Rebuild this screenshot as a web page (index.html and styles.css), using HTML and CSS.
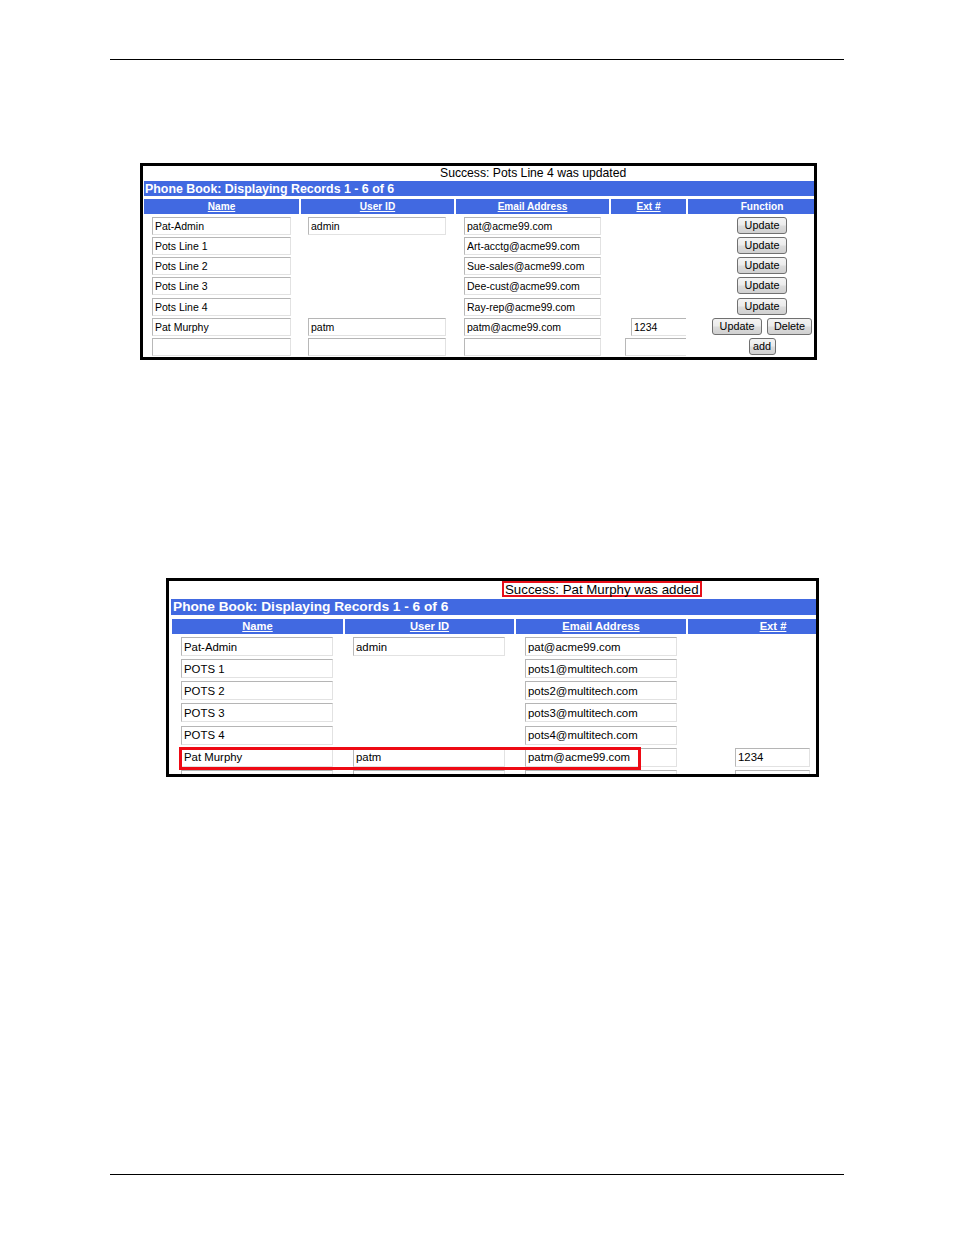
FILE: index.html
```html
<!DOCTYPE html>
<html>
<head>
<meta charset="utf-8">
<link rel="stylesheet" href="styles.css">
</head>
<body>
<div class="page">
  <div class="rule"></div>

  <div class="shot shot1">
    <div class="msg1">Success: Pots Line 4 was updated</div>
    <div class="title1">Phone Book: Displaying Records 1 - 6 of 6</div>
    <div class="grid1">
      <div class="hd"><a>Name</a></div>
      <div class="hd"><a>User ID</a></div>
      <div class="hd"><a>Email Address</a></div>
      <div class="hd"><a>Ext #</a></div>
      <div class="hd">Function</div>

      <div class="c c-name"><input class="f1 f1-name" type="text" value="Pat-Admin"></div>
      <div class="c c-uid"><input class="f1 f1-uid" type="text" value="admin"></div>
      <div class="c c-mail"><input class="f1 f1-mail" type="text" value="pat@acme99.com"></div>
      <div class="c c-ext"></div>
      <div class="c c-fn"><button class="btn">Update</button></div>

      <div class="c c-name"><input class="f1 f1-name" type="text" value="Pots Line 1"></div>
      <div class="c c-uid"></div>
      <div class="c c-mail"><input class="f1 f1-mail" type="text" value="Art-acctg@acme99.com"></div>
      <div class="c c-ext"></div>
      <div class="c c-fn"><button class="btn">Update</button></div>

      <div class="c c-name"><input class="f1 f1-name" type="text" value="Pots Line 2"></div>
      <div class="c c-uid"></div>
      <div class="c c-mail"><input class="f1 f1-mail" type="text" value="Sue-sales@acme99.com"></div>
      <div class="c c-ext"></div>
      <div class="c c-fn"><button class="btn">Update</button></div>

      <div class="c c-name"><input class="f1 f1-name" type="text" value="Pots Line 3"></div>
      <div class="c c-uid"></div>
      <div class="c c-mail"><input class="f1 f1-mail" type="text" value="Dee-cust@acme99.com"></div>
      <div class="c c-ext"></div>
      <div class="c c-fn"><button class="btn">Update</button></div>

      <div class="c c-name"><input class="f1 f1-name" type="text" value="Pots Line 4"></div>
      <div class="c c-uid"></div>
      <div class="c c-mail"><input class="f1 f1-mail" type="text" value="Ray-rep@acme99.com"></div>
      <div class="c c-ext"></div>
      <div class="c c-fn"><button class="btn">Update</button></div>

      <div class="c c-name"><input class="f1 f1-name" type="text" value="Pat Murphy"></div>
      <div class="c c-uid"><input class="f1 f1-uid" type="text" value="patm"></div>
      <div class="c c-mail"><input class="f1 f1-mail" type="text" value="patm@acme99.com"></div>
      <div class="c c-ext"><input class="f1 f1-ext" type="text" value="1234"></div>
      <div class="c c-fn"><button class="btn">Update</button><button class="btn btn-del">Delete</button></div>

      <div class="c c-name"><input class="f1 f1-name" type="text" value=""></div>
      <div class="c c-uid"><input class="f1 f1-uid" type="text" value=""></div>
      <div class="c c-mail"><input class="f1 f1-mail" type="text" value=""></div>
      <div class="c c-ext"><input class="f1 f1-ext f1-ext-new" type="text" value=""></div>
      <div class="c c-fn"><button class="btn btn-add">add</button></div>
    </div>
  </div>

  <div class="shot shot2">
    <div class="msg2"><span class="msg2-box">Success: Pat Murphy was added</span></div>
    <div class="title2">Phone Book: Displaying Records 1 - 6 of 6</div>
    <div class="grid2">
      <div class="hd2"><a>Name</a></div>
      <div class="hd2"><a>User ID</a></div>
      <div class="hd2"><a>Email Address</a></div>
      <div class="hd2"><a>Ext #</a></div>

      <div class="c2 c2-a"><input class="f2" type="text" value="Pat-Admin"></div>
      <div class="c2 c2-b"><input class="f2" type="text" value="admin"></div>
      <div class="c2 c2-a"><input class="f2" type="text" value="pat@acme99.com"></div>
      <div class="c2 c2-ext"></div>

      <div class="c2 c2-a"><input class="f2" type="text" value="POTS 1"></div>
      <div class="c2 c2-b"></div>
      <div class="c2 c2-a"><input class="f2" type="text" value="pots1@multitech.com"></div>
      <div class="c2 c2-ext"></div>

      <div class="c2 c2-a"><input class="f2" type="text" value="POTS 2"></div>
      <div class="c2 c2-b"></div>
      <div class="c2 c2-a"><input class="f2" type="text" value="pots2@multitech.com"></div>
      <div class="c2 c2-ext"></div>

      <div class="c2 c2-a"><input class="f2" type="text" value="POTS 3"></div>
      <div class="c2 c2-b"></div>
      <div class="c2 c2-a"><input class="f2" type="text" value="pots3@multitech.com"></div>
      <div class="c2 c2-ext"></div>

      <div class="c2 c2-a"><input class="f2" type="text" value="POTS 4"></div>
      <div class="c2 c2-b"></div>
      <div class="c2 c2-a"><input class="f2" type="text" value="pots4@multitech.com"></div>
      <div class="c2 c2-ext"></div>

      <div class="c2 c2-a"><input class="f2" type="text" value="Pat Murphy"></div>
      <div class="c2 c2-b"><input class="f2" type="text" value="patm"></div>
      <div class="c2 c2-a"><input class="f2" type="text" value="patm@acme99.com"></div>
      <div class="c2 c2-ext"><input class="f2 f2-ext" type="text" value="1234"></div>

      <div class="c2 c2-a"><input class="f2" type="text" value=""></div>
      <div class="c2 c2-b"><input class="f2" type="text" value=""></div>
      <div class="c2 c2-a"><input class="f2" type="text" value=""></div>
      <div class="c2 c2-ext"><input class="f2 f2-ext" type="text" value=""></div>
    </div>
    <div class="hilite"></div>
  </div>

  <div class="rule rule-bottom"></div>
</div>
</body>
</html>
```

FILE: styles.css
```css
html, body {
  margin: 0;
  padding: 0;
  background: #ffffff;
}

.page {
  width: 954px;
  height: 1235px;
  padding-top: 59px;
  box-sizing: border-box;
  font-family: "Liberation Sans", Arial, sans-serif;
  color: #000;
}

.rule {
  margin-left: 110px;
  width: 734px;
  height: 0;
  border-top: 1px solid #000;
}

.rule-bottom {
  margin-top: 397px;
}

.shot {
  box-sizing: border-box;
  border: 3px solid #000;
  overflow: hidden;
  background: #fff;
}

/* ---------- screenshot 1 ---------- */
.shot1 {
  margin-top: 103px;
  margin-left: 140px;
  width: 677px;
  height: 197px;
  padding-left: 1px;
}

.msg1 {
  height: 15px;
  line-height: 15px;
  font-size: 12.2px;
  padding-left: 296px;
  white-space: nowrap;
}

.title1 {
  height: 15px;
  line-height: 16px;
  background: #4169e1;
  color: #fff;
  font-weight: bold;
  font-size: 12.4px;
  padding-left: 1px;
  white-space: nowrap;
}

.grid1 {
  margin-top: 3px;
  display: grid;
  grid-template-columns: 155px 153px 153px 75px 148px;
  grid-template-rows: 17.5px;
  grid-auto-rows: 20.33px;
  column-gap: 2px;
  width: 692px;
}

.hd {
  align-self: start;
  height: 15px;
  background: #4169e1;
  color: #fff;
  font-weight: bold;
  font-size: 10.1px;
  line-height: 16px;
  text-align: center;
  white-space: nowrap;
}

.hd a, .hd2 a {
  color: #fff;
  text-decoration: underline;
}

.c {
  overflow: hidden;
  white-space: nowrap;
}

.f1 {
  box-sizing: border-box;
  height: 18px;
  margin: 0;
  padding: 0 0 0 2px;
  border: 1px solid;
  border-color: #b5b5b5 #e2e2e2 #e2e2e2 #b8b8b8;
  font-family: "Liberation Sans", Arial, sans-serif;
  font-size: 10.5px;
  color: #000;
  background: #fff;
  outline: none;
  display: block;
}

.f1-name { width: 139px; margin-left: 8px; }
.f1-uid { width: 138px; margin-left: 7px; }
.f1-mail { width: 137px; margin-left: 8px; }
.f1-ext { width: 70px; margin-left: 20px; }
.f1-ext-new { margin-left: 14px; }

.c-fn {
  display: flex;
  justify-content: center;
  align-items: flex-start;
  gap: 5px;
}

.btn {
  box-sizing: border-box;
  width: 50px;
  height: 17px;
  margin: 0;
  padding: 0;
  border: 1px solid #707070;
  border-radius: 3px;
  background: linear-gradient(#f3f3f3, #ebebeb 48%, #dcdcdc 52%, #d0d0d0);
  font-family: "Liberation Sans", Arial, sans-serif;
  font-size: 10.8px;
  color: #000;
  line-height: 15px;
}

.btn-del { width: 45px; }
.btn-add { width: 27px; }

/* ---------- screenshot 2 ---------- */
.shot2 {
  position: relative;
  margin-top: 218px;
  margin-left: 166px;
  width: 653px;
  height: 199px;
  padding-left: 2px;
}

.msg2 {
  display: flex;
  align-items: flex-start;
  height: 18px;
  padding-left: 331px;
  white-space: nowrap;
}

.msg2-box {
  display: block;
  box-sizing: border-box;
  height: 16px;
  line-height: 13px;
  border: 2px solid #e8101a;
  padding: 0 1px;
  font-size: 13.3px;
}

.title2 {
  height: 16px;
  line-height: 16px;
  background: #4169e1;
  color: #fff;
  font-weight: bold;
  font-size: 13.7px;
  padding-left: 2px;
  white-space: nowrap;
}

.grid2 {
  margin-top: 4px;
  margin-left: 1px;
  display: grid;
  grid-template-columns: 171px 169px 170px 170px;
  grid-template-rows: 18px;
  grid-auto-rows: 22.17px;
  column-gap: 2px;
  width: 690px;
}

.hd2 {
  background: #4169e1;
  color: #fff;
  font-weight: bold;
  font-size: 11.2px;
  line-height: 15px;
  height: 15px;
  text-align: center;
  white-space: nowrap;
}

.c2 {
  overflow: hidden;
  white-space: nowrap;
}

.f2 {
  box-sizing: border-box;
  width: 152px;
  height: 19px;
  margin: 0;
  padding: 0 0 0 2px;
  border: 1px solid;
  border-color: #b5b5b5 #e2e2e2 #e2e2e2 #b8b8b8;
  font-family: "Liberation Sans", Arial, sans-serif;
  font-size: 11.4px;
  color: #000;
  background: #fff;
  outline: none;
  display: block;
}

.c2-a .f2 { margin-left: 9px; }
.c2-b .f2 { margin-left: 8px; }
.c2-ext .f2 { margin-left: 47px; }
.f2-ext { width: 75px; }

.hilite {
  position: absolute;
  left: 10px;
  top: 166px;
  width: 462px;
  height: 23px;
  box-sizing: border-box;
  border: 3px solid #ee0a14;
  pointer-events: none;
}
```
